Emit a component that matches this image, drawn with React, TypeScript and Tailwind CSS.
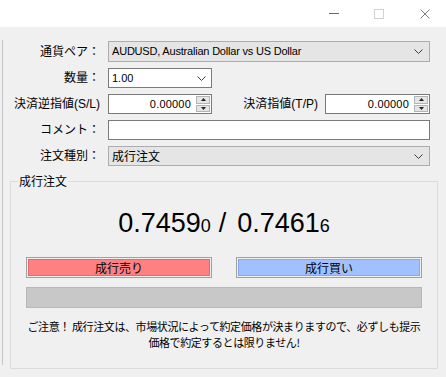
import React from 'react';

// shared font stacks
const ui = "font-['Liberation_Sans','Noto_Sans_CJK_JP',sans-serif]";
const jp = "font-['Noto_Sans_CJK_JP',sans-serif]";

const Chevron = () => (
  <svg width="9" height="5" viewBox="0 0 9 5" className="shrink-0">
    <path d="M0.5 0.5 L4.5 4.5 L8.5 0.5" fill="none" stroke="#3c3c3c" strokeWidth="1" />
  </svg>
);

const Spinner = () => (
  <div className="flex flex-col w-[15px] h-full py-px pr-px gap-px shrink-0">
    <div className="flex-1 bg-[#e5e5e5] border border-[#b4b4b4] flex items-center justify-center">
      <svg width="5" height="3" viewBox="0 0 5 3">
        <path d="M2.5 0 L5 3 L0 3 Z" fill="#202020" />
      </svg>
    </div>
    <div className="flex-1 bg-[#e5e5e5] border border-[#b4b4b4] flex items-center justify-center">
      <svg width="5" height="3" viewBox="0 0 5 3">
        <path d="M0 0 L5 0 L2.5 3 Z" fill="#202020" />
      </svg>
    </div>
  </div>
);

const Label: React.FC<{ children: React.ReactNode }> = ({ children }) => (
  <div className={`w-[97px] shrink-0 text-right text-[12px] leading-[20px] mr-[8px] whitespace-nowrap ${ui}`}>
    {children}
  </div>
);

const NumberBox: React.FC<{ width: string }> = ({ width }) => (
  <div className={`${width} h-full shrink-0 flex items-center bg-white border border-[#7a7a7a]`}>
    <div className={`flex-1 text-right pr-[5px] text-[11px] tracking-[0.2px] ${ui}`}>0.00000</div>
    <Spinner />
  </div>
);

export default function App() {
  return (
    <div className={`w-[446px] h-[377px] bg-[#f0f0f0] overflow-hidden text-black ${ui}`}>
      {/* title bar */}
      <div className="h-[27px] bg-white flex items-center justify-end pr-[16px]">
        <div className="w-[10px] h-px bg-[#6a6a6a]" />
        <div className="ml-[35px] w-[10px] h-[10px] border border-[#d2d2d2]" />
        <svg width="10" height="10" viewBox="0 0 10 10" className="ml-[36px]">
          <path d="M0.5 0.5 L9.5 9.5 M9.5 0.5 L0.5 9.5" stroke="#7a7a7a" strokeWidth="1" />
        </svg>
      </div>

      <div className="flex">
        <div className="mt-[13px] h-[325px] w-[3px] border-r border-[#c4c4c4] shrink-0" />

        <div className="flex-1">
          <div className="w-[427px] pt-[14px] flex flex-col gap-[6px]">
            <div className="flex items-center h-[21px]">
              <Label>通貨ペア：</Label>
              <div className="w-[322px] h-full flex items-center justify-between bg-[#e5e5e5] border border-[#adadad] pl-[3px] pr-[6px]">
                <span className="text-[11px] tracking-[-0.2px]">AUDUSD, Australian Dollar vs US Dollar</span>
                <Chevron />
              </div>
            </div>

            <div className="flex items-center h-[20px]">
              <Label>数量：</Label>
              <div className="w-[104px] h-full flex items-center justify-between bg-white border border-[#7a7a7a] pl-[3px] pr-[5px]">
                <span className="text-[11px]">1.00</span>
                <Chevron />
              </div>
            </div>

            <div className="flex items-center h-[20px]">
              <Label>決済逆指値(S/L)</Label>
              <NumberBox width="w-[104px]" />
              <div className="flex-1 text-right text-[12px] whitespace-nowrap">決済指値(T/P)</div>
              <div className="ml-[7px] h-full">
                <NumberBox width="w-[105px]" />
              </div>
            </div>

            <div className="flex items-center h-[20px]">
              <Label>コメント：</Label>
              <div className="w-[322px] h-full bg-white border border-[#7a7a7a]" />
            </div>

            <div className="flex items-center h-[20px]">
              <Label>注文種別：</Label>
              <div className="w-[322px] h-full flex items-center justify-between bg-[#e5e5e5] border border-[#adadad] pl-[3px] pr-[6px]">
                <span className={`text-[12px] ${jp}`}>成行注文</span>
                <Chevron />
              </div>
            </div>
          </div>

          <fieldset className="mt-[7px] ml-[7px] w-[427px] h-[196px] border border-[#dcdcdc] px-[15px]">
            <legend className={`ml-[-8px] px-[1px] text-[12px] leading-[16px] ${jp}`}>成行注文</legend>

            <div className="mt-[19px] h-[30px] leading-[30px] text-center text-[27px] font-['Liberation_Sans',sans-serif] whitespace-nowrap">
              0.7459<span className="text-[18px]">0</span>
              <span className="ml-[8px] mr-[11px]">/</span>
              0.7461<span className="text-[18px]">6</span>
            </div>

            <div className="mt-[19px] flex gap-[24px]">
              <div className="w-[186px] h-[21px] border border-[#a0a0a0] p-px">
                <div className={`h-full bg-[#ff8080] border border-[#e26a6a] flex items-center justify-center text-[12px] ${jp}`}>
                  成行売り
                </div>
              </div>
              <div className="w-[186px] h-[21px] border border-[#a0a0a0] p-px">
                <div className={`h-full bg-[#a0c0ff] border border-[#86a8ec] flex items-center justify-center text-[12px] ${jp}`}>
                  成行買い
                </div>
              </div>
            </div>

            <div className="mt-[9px] w-[396px] h-[21px] bg-[#c8c8c8] border border-[#b8b8b8]" />

            <div className={`mt-[10px] w-[396px] text-center text-[11px] leading-[16px] tracking-[-0.4px] whitespace-nowrap ${jp}`}>
              ご注意！ 成行注文は、市場状況によって約定価格が決まりますので、必ずしも提示
              <br />
              価格で約定するとは限りません!
            </div>
          </fieldset>
        </div>
      </div>
    </div>
  );
}
